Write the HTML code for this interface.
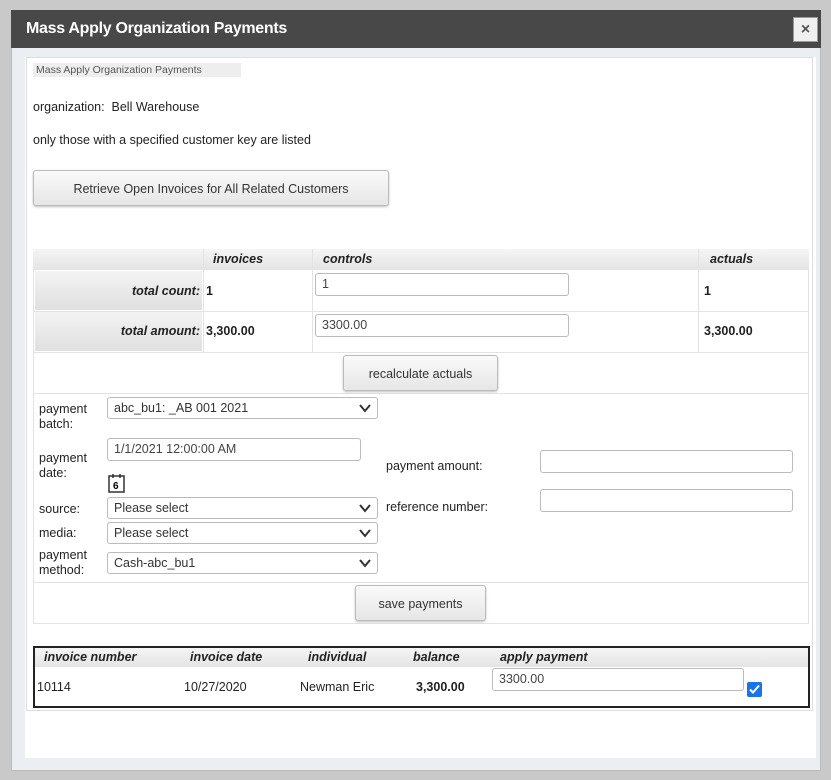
<!DOCTYPE html>
<html><head><meta charset="utf-8"><style>
*{box-sizing:border-box;margin:0;padding:0}
body{width:831px;height:780px;background:#c9c9c9;font-family:"Liberation Sans",sans-serif;font-size:12.5px;color:#222;position:relative;overflow:hidden}
.a{position:absolute}
.dlg{left:11px;top:10px;width:810px;height:761px;background:#ebeef3;border:1px solid #bbb}
.title{left:11px;top:10px;width:810px;height:38px;background:#484848;color:#fff;font-weight:bold;font-size:16px;line-height:38px;padding-left:15px;letter-spacing:-0.3px}
.close{left:793px;top:17px;width:25px;height:25px;background:#f0f0f0;border:1px solid #999;color:#555;font-size:16px;font-weight:bold;text-align:center;line-height:23px}
.white{left:25px;top:57px;width:791px;height:701px;background:#fff}
.panel{left:26px;top:57px;width:787px;height:654px;border:1px solid #ddd;background:#fff}
.btn{background:linear-gradient(#fafafa,#e6e6e6);border:1px solid #bbb;border-radius:3px;box-shadow:0 1px 2px rgba(0,0,0,.25);text-align:center;color:#333}
.inp{background:#fff;border:1px solid #bbb;border-radius:3px;padding:3px 6px;color:#444;font-size:12.5px}
.sel{background:#fff;border:1px solid #bbb;border-radius:3px;padding:3px 6px;color:#333;font-size:12.5px}
.sel svg{position:absolute;right:6px;top:6px}
.hd{background:linear-gradient(#f5f5f5,#e4e4e4)}
.bi{font-weight:bold;font-style:italic}
.lbl{background:linear-gradient(#f3f3f3,#e0e0e0)}
.ln{background:#e3e3e3}
</style></head><body>
<div class="a dlg"></div>
<div class="a title">Mass Apply Organization Payments</div>
<div class="a close">×</div>
<div class="a white"></div>
<div class="a panel"></div>
<div class="a" style="left:33px;top:63px;width:208px;height:14px;background:#eee;font-size:10.5px;color:#555;padding-left:3px;line-height:14px">Mass Apply Organization Payments</div>
<div class="a" style="left:33px;top:100px">organization:&nbsp; Bell Warehouse</div>
<div class="a" style="left:33px;top:133px">only those with a specified customer key are listed</div>
<div class="a btn" style="left:33px;top:170px;width:356px;height:36px;line-height:36px">Retrieve Open Invoices for All Related Customers</div>

<!-- totals table -->
<div class="a" style="left:33px;top:249px;width:776px;height:375px;border:1px solid #e3e3e3"></div>
<div class="a hd" style="left:33px;top:249px;width:776px;height:21px"></div>
<div class="a bi" style="left:213px;top:252px">invoices</div>
<div class="a bi" style="left:323px;top:252px">controls</div>
<div class="a bi" style="left:710px;top:252px">actuals</div>
<div class="a lbl" style="left:35px;top:271px;width:167px;height:39px"></div>
<div class="a lbl" style="left:35px;top:312px;width:167px;height:39px"></div>
<div class="a ln" style="left:33px;top:311px;width:776px;height:1px"></div>
<div class="a ln" style="left:33px;top:352px;width:776px;height:1px"></div>
<div class="a ln" style="left:33px;top:393px;width:776px;height:1px"></div>
<div class="a ln" style="left:33px;top:582px;width:776px;height:1px"></div>
<div class="a ln" style="left:203px;top:249px;width:1px;height:103px"></div>
<div class="a ln" style="left:312px;top:249px;width:1px;height:103px"></div>
<div class="a ln" style="left:698px;top:249px;width:1px;height:103px"></div>
<div class="a bi" style="left:35px;top:284px;width:165px;text-align:right">total count:</div>
<div class="a" style="left:206px;top:284px;font-weight:bold">1</div>
<div class="a inp" style="left:315px;top:273px;width:254px;height:23px">1</div>
<div class="a" style="left:704px;top:284px;font-weight:bold">1</div>
<div class="a bi" style="left:35px;top:324px;width:165px;text-align:right">total amount:</div>
<div class="a" style="left:206px;top:324px;font-weight:bold">3,300.00</div>
<div class="a inp" style="left:315px;top:314px;width:254px;height:23px">3300.00</div>
<div class="a" style="left:704px;top:324px;font-weight:bold">3,300.00</div>
<div class="a btn" style="left:343px;top:355px;width:155px;height:36px;line-height:36px">recalculate actuals</div>

<!-- form -->
<div class="a" style="left:39px;top:402px;line-height:15px">payment<br>batch:</div>
<div class="a sel" style="left:107px;top:397px;width:271px;height:22px">abc_bu1: _AB 001 2021<svg width="12" height="9"><path d="M1 1l5 6 5-6" stroke="#333" stroke-width="2" fill="none"/></svg></div>
<div class="a" style="left:39px;top:451px;line-height:15px">payment<br>date:</div>
<div class="a inp" style="left:107px;top:438px;width:254px;height:23px">1/1/2021 12:00:00 AM</div>
<svg class="a" style="left:107px;top:473px" width="20" height="21"><rect x="2" y="3" width="15" height="16" fill="#fff" stroke="#333" stroke-width="1.5"/><path d="M6 1v4M13 1v4" stroke="#333" stroke-width="1.5"/><text x="6" y="16" font-size="10" font-weight="bold" font-family="Liberation Sans">6</text></svg>
<div class="a" style="left:386px;top:459px">payment amount:</div>
<div class="a inp" style="left:540px;top:450px;width:253px;height:23px"></div>
<div class="a" style="left:386px;top:500px">reference number:</div>
<div class="a inp" style="left:540px;top:489px;width:253px;height:23px"></div>
<div class="a" style="left:39px;top:502px">source:</div>
<div class="a sel" style="left:107px;top:497px;width:271px;height:22px">Please select<svg width="12" height="9"><path d="M1 1l5 6 5-6" stroke="#333" stroke-width="2" fill="none"/></svg></div>
<div class="a" style="left:39px;top:526px">media:</div>
<div class="a sel" style="left:107px;top:522px;width:271px;height:22px">Please select<svg width="12" height="9"><path d="M1 1l5 6 5-6" stroke="#333" stroke-width="2" fill="none"/></svg></div>
<div class="a" style="left:39px;top:548px;line-height:15px">payment<br>method:</div>
<div class="a sel" style="left:107px;top:552px;width:271px;height:22px">Cash-abc_bu1<svg width="12" height="9"><path d="M1 1l5 6 5-6" stroke="#333" stroke-width="2" fill="none"/></svg></div>
<div class="a btn" style="left:355px;top:585px;width:131px;height:36px;line-height:36px">save payments</div>

<!-- invoice table -->
<div class="a" style="left:33px;top:646px;width:777px;height:62px;border:2px solid #222"></div>
<div class="a hd" style="left:35px;top:648px;width:773px;height:19px"></div>
<div class="a bi" style="left:44px;top:650px">invoice number</div>
<div class="a bi" style="left:190px;top:650px">invoice date</div>
<div class="a bi" style="left:308px;top:650px">individual</div>
<div class="a bi" style="left:413px;top:650px">balance</div>
<div class="a bi" style="left:500px;top:650px">apply payment</div>
<div class="a" style="left:37px;top:680px">10114</div>
<div class="a" style="left:184px;top:680px">10/27/2020</div>
<div class="a" style="left:300px;top:680px">Newman Eric</div>
<div class="a" style="left:416px;top:680px;font-weight:bold">3,300.00</div>
<div class="a inp" style="left:492px;top:668px;width:252px;height:23px">3300.00</div>
<div class="a" style="left:747px;top:682px;width:15px;height:15px;background:#1a73e8;border-radius:2px"><svg width="15" height="15"><path d="M3 7.5l3 3 6-7" stroke="#fff" stroke-width="2" fill="none"/></svg></div>
</body></html>
